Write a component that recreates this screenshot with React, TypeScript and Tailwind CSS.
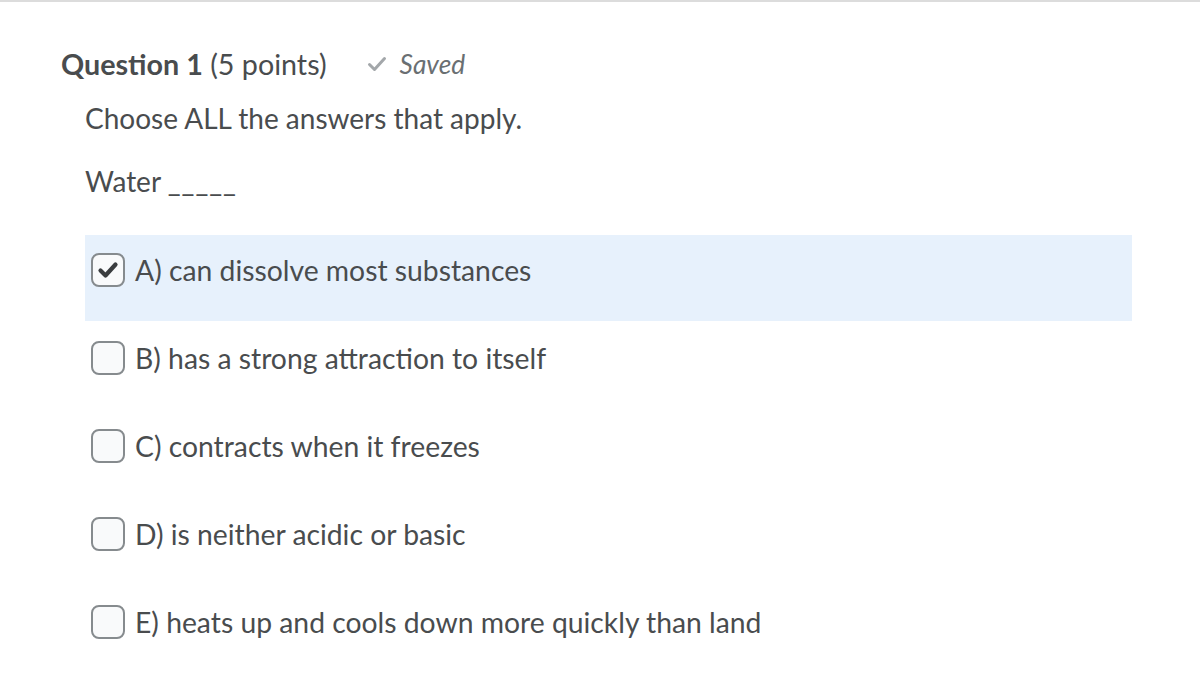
import { useState } from 'react'

const OPTIONS = [
  'A) can dissolve most substances',
  'B) has a strong attraction to itself',
  'C) contracts when it freezes',
  'D) is neither acidic or basic',
  'E) heats up and cools down more quickly than land',
]

function CheckIcon({ className, width = 3.2 }: { className?: string; width?: number }) {
  return (
    <svg viewBox="0 0 24 24" className={className} fill="none" stroke="currentColor" strokeWidth={width} strokeLinecap="round" strokeLinejoin="round">
      <path d="M4.5 12.5l5 5L19.5 6.5" />
    </svg>
  )
}

function Option({ label, checked, onToggle }: { label: string; checked: boolean; onToggle: () => void }) {
  return (
    <div
      onClick={onToggle}
      className={`flex items-start h-[86px] mb-[2px] pt-[18px] pl-[6px] cursor-pointer ${checked ? 'bg-[#e7f1fc]' : ''}`}
    >
      <span className="flex h-[34px] w-[34px] shrink-0 items-center justify-center rounded-[8px] border-2 border-[#868b8e] bg-[#f9fafb] text-[#3a3d3f]">
        {checked && <CheckIcon className="h-[24px] w-[24px]" width={4.2} />}
      </span>
      <span className="ml-[10px] text-[28.3px] leading-[34px] text-[#494c4e]">{label}</span>
    </div>
  )
}

export default function App() {
  const [checked, setChecked] = useState<boolean[]>([true, false, false, false, false])

  return (
    <div className="min-h-[690px] w-[1200px] bg-white border-t-2 border-[#dcdcdc] font-['Lato','Noto_Sans',sans-serif]">
      <div className="pl-[61px] pt-[45px]">
        <div className="flex items-center text-[#494c4e]">
          <h2 className="text-[28.7px] leading-[34px]">
            <span className="font-bold">Question 1</span> (5 points)
          </h2>
          <span className="ml-[38px] flex items-center text-[#6a6f72]">
            <CheckIcon className="h-[24px] w-[24px] text-[#a3a7aa]" width={3} />
            <span className="ml-[11px] text-[26.3px] italic leading-[34px]">Saved</span>
          </span>
        </div>
      </div>
      <div className="pl-[85px] pr-[68px]">
        <p className="mt-[20px] text-[28px] leading-[34px] text-[#494c4e]">Choose ALL the answers that apply.</p>
        <p className="mt-[29px] text-[28px] leading-[34px] text-[#494c4e]">
          Water <span className="tracking-[1px]">_____</span>
        </p>
        <div className="mt-[37px]">
          {OPTIONS.map((o, i) => (
            <Option
              key={o}
              label={o}
              checked={checked[i]}
              onToggle={() => setChecked((c) => c.map((v, j) => (j === i ? !v : v)))}
            />
          ))}
        </div>
      </div>
    </div>
  )
}
